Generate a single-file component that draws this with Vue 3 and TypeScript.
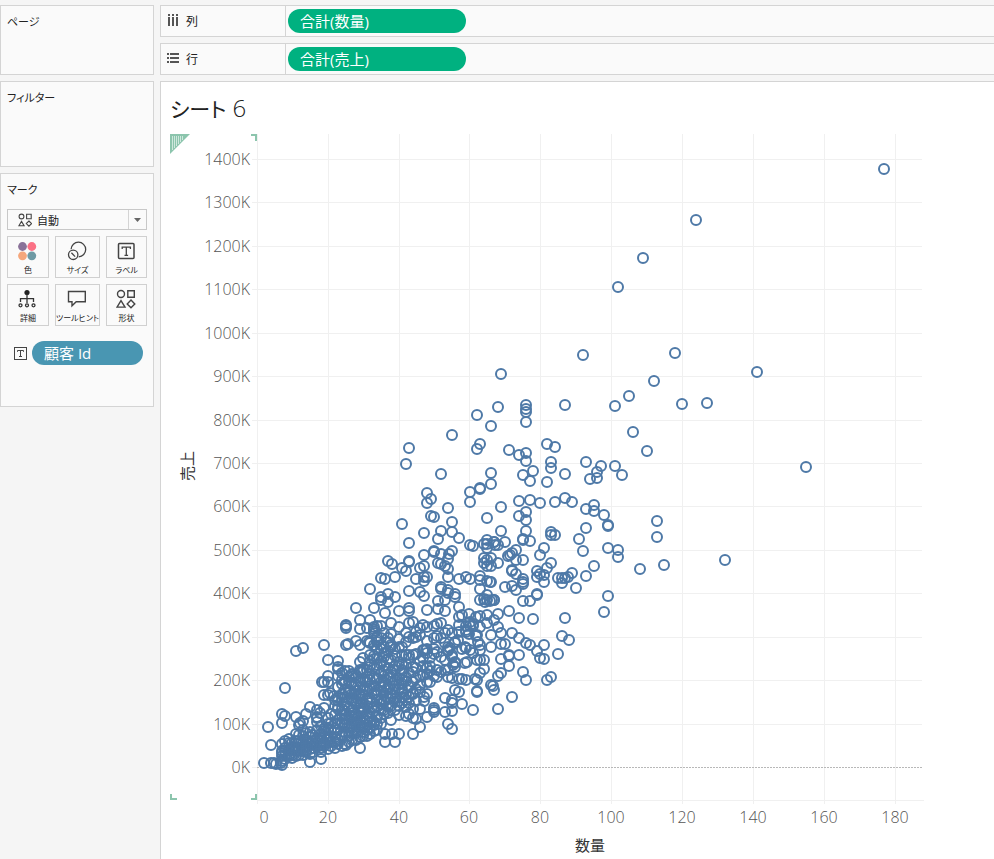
<script setup lang="ts">
interface Shelf { id: string; label: string; pill: string }
interface Dot { x: number; y: number }

const shelves: Shelf[] = [
  { id: 'columns', label: '列', pill: '合計(数量)' },
  { id: 'rows', label: '行', pill: '合計(売上)' },
]

const unitX = 3.545
const unitY = 43.43
const px = (q: number) => Math.floor(257.2 + q * unitX) + 0.5
const py = (hundreds: number) => Math.round(767 - hundreds * unitY) + 0.5

const xTicks = Array.from({ length: 10 }, (_, i) => i * 20)
const yTicks = Array.from({ length: 15 }, (_, i) => i)

/* Customers outside the crowded core, as plot positions. */
const outer = `
884,169 696,220 643,258 618,287 583,355 675,353 654,381 757,372 501,374 629,396 615,406 565,405 682,404 707,403
498,407 526,405 526,409 526,412 526,422 477,415 491,426 452,435 633,432 647,451 409,448 406,464 806,467 725,560
657,521 657,537 664,565 640,569 509,450 519,455 526,453 526,461 547,444 555,447 551,462 551,468 586,462 601,466
615,466 622,475 597,472 597,478 590,479 523,475 533,471 530,481 547,482 565,474 491,473 491,484 519,501 530,500
540,503 555,502 565,498 572,502 586,509 594,505 594,511 604,515 501,507 526,512 519,516 526,520 501,531 526,531
523,539 523,540 530,541 551,532 551,535 555,535 586,528 579,539 583,551 608,525 608,526 594,566 586,576 608,548
618,550 618,557 576,588 572,573 608,596 604,612 544,548 540,555 551,563 547,568 537,571 540,574 544,575 537,577
544,582 537,594 537,595 558,578 562,578 565,578 562,583 568,577 523,601 530,601 523,579 523,582 523,584 512,570
512,571 516,574 505,587 512,586 516,590 510,555 508,556 512,553 516,550 516,560 523,560 505,542 494,542 495,545
498,545 491,558 498,563 491,566 491,582 494,600 492,600 509,611 565,618 562,636 569,640 558,654 544,645 551,677
547,680 540,658 544,659 537,651 526,643 530,645 519,638 512,633 501,633 519,618 533,619 498,614 498,627 494,620
491,635 491,647 501,644 505,644 501,659 509,655 509,656 519,655 509,666 523,672 526,680 501,673 498,676 491,685
494,690 512,697 498,709 477,449 480,444 441,474 427,493 431,499 427,503 448,508 431,516 434,517 452,522 470,492
470,502 480,489 480,488 487,518 402,524 424,533 441,531 452,532 438,539 459,538 409,543 470,545 473,546 424,555
434,551 434,552 441,554 449,554 452,551 448,559 388,561 392,564 409,561 409,562 402,568 406,571 420,568 424,566
438,563 441,564 445,566 448,569 381,578 385,579 395,577 416,579 424,577 427,577 424,581 448,577 459,579 466,577
470,579 480,576 480,580 480,589 487,581 490,582 487,540 487,544 484,544 487,548 494,542 484,558 487,560 484,563
487,566 409,591 420,592 424,596 441,587 441,589 448,590 448,593 455,594 455,597 438,601 445,600 370,589 381,597
381,600 388,594 395,597 374,608 388,602 409,608 427,610 438,609 459,607 480,600 487,595 487,600 485,602 494,600
490,601 484,599 385,613 399,611 445,611 473,710 477,692 477,691 493,686 462,704 448,724 452,729 413,734 420,727
385,742 395,742 385,734 392,734 399,734 434,708 434,710 434,712 427,717 445,712 452,711 445,698 452,700 459,692
455,690 413,693 427,694 424,697 424,701 452,703 475,679 477,680 459,679 462,679 466,680 480,673 484,669 480,660
484,660 477,660 480,650 480,645 478,642 477,635 467,662 465,663 455,662 455,667 453,665 434,649 424,650 426,650
448,647 450,648 458,640 455,643 466,632 470,626 473,624 470,622 466,648 470,650 465,647 356,608 360,620 370,620
346,625 346,626 346,628 360,629 367,628 374,629 374,631 324,645 303,648 296,651 346,645 348,644 356,641 360,645
367,641 369,642 328,660 338,661 285,688 268,727 271,745 282,714 285,716 282,723 296,717 306,714 310,707 303,721
300,723 299,725 317,710 324,708 320,713 317,718 321,726 264,763 271,763 274,763 276,764 281,763 282,765 310,762
321,759 324,682 328,676 328,682 322,682 324,695 328,695 330,693 334,696 338,669 338,701 346,745 360,748
`
const parsed: Dot[] = outer.trim().split(/\s+/).map((pair) => {
  const [x, y] = pair.split(',').map(Number)
  return { x, y }
})

/* Crowded core: quantity, top, bottom, number of customers at that quantity. */
const core: [number, number, number, number][] = [
  [7, 744, 762, 5], [8, 739, 760, 5], [9, 735, 760, 5], [10, 740, 760, 5], [11, 731, 757, 5], [12, 732, 758, 6],
  [13, 728, 757, 6], [14, 732, 754, 6], [15, 731, 755, 5], [16, 733, 753, 5], [17, 712, 752, 6],
  [18, 733, 753, 6], [19, 724, 750, 6], [20, 712, 750, 6], [21, 714, 750, 6], [22, 693, 750, 8],
  [23, 665, 748, 11], [24, 666, 747, 12], [25, 666, 745, 13], [26, 664, 743, 13], [27, 667, 742, 13],
  [28, 668, 742, 14], [29, 655, 742, 15], [30, 656, 741, 15], [31, 665, 738, 14], [32, 637, 739, 14],
  [33, 618, 736, 15], [34, 618, 734, 15], [35, 622, 726, 15], [36, 632, 716, 14], [37, 630, 715, 14],
  [38, 610, 720, 11], [39, 645, 712, 10], [40, 624, 718, 11], [41, 645, 706, 11], [42, 625, 722, 10],
  [43, 607, 718, 10], [44, 616, 720, 9], [45, 617, 722, 8], [46, 615, 716, 7], [47, 623, 685, 5],
  [48, 618, 688, 7], [49, 649, 684, 4], [50, 615, 680, 4], [51, 612, 687, 5], [52, 619, 678, 4],
  [53, 625, 679, 4], [54, 621, 687, 5], [55, 625, 682, 4], [56, 628, 665, 2], [57, 612, 635, 3],
  [58, 610, 655, 2], [59, 609, 645, 2], [60, 611, 640, 2], [61, 611, 658, 2], [62, 607, 640, 2],
  [63, 609, 630, 2], [65, 607, 628, 2],
]
let seed = 20
const next = () => {
  seed = (seed * 16807) % 2147483647
  return seed / 2147483647
}
const packed: Dot[] = core.flatMap(([q, top, bottom, n]) =>
  Array.from({ length: n }, (_, i) => ({
    x: px(q) - 0.5,
    y: Math.round(top + ((i + next() * 0.95) / n) ** 0.85 * (bottom - top)),
  })),
)
const dots: Dot[] = [...packed, ...parsed]
</script>

<template>
  <div class="workbook">
    <aside class="side">
      <section class="card pages"><h2>ページ</h2></section>
      <section class="card filters"><h2>フィルター</h2></section>
      <section class="card marks">
        <h2>マーク</h2>
        <button class="type" type="button">
          <svg width="14" height="14" viewBox="0 0 14 14" fill="none" stroke="#444" stroke-width="1.1">
            <circle cx="3.5" cy="3.5" r="2.4" /><path d="M8.6 1.2h4.6v4.6H8.6zM3.5 8.4l2.6 4.4H.9zM10.9 8l2.6 2.6-2.6 2.6-2.6-2.6z" />
          </svg>
          <span class="type-name">自動</span>
          <span class="arrow"><svg width="7" height="4" viewBox="0 0 7 4"><path d="M0 0h7L3.5 4z" fill="#666" /></svg></span>
        </button>
        <div class="tiles">
          <button type="button" class="tile">
            <svg width="20" height="20" viewBox="0 0 20 20">
              <circle cx="5.5" cy="5.5" r="4.4" fill="#8a7299" /><circle cx="14.8" cy="5.5" r="4.4" fill="#fb7185" />
              <circle cx="5.5" cy="14.8" r="4.4" fill="#f5a77c" /><circle cx="14.8" cy="14.8" r="4.4" fill="#6f9aa5" />
            </svg><span>色</span>
          </button>
          <button type="button" class="tile">
            <svg width="20" height="20" viewBox="0 0 20 20" fill="none" stroke="#444" stroke-width="1.3">
              <path d="M4.1 8.2A7.3 7.3 0 1 1 11.7 15.8" /><circle cx="6.2" cy="13.8" r="4.7" /><path d="M4.4 11.8l3.7 3.8" />
            </svg><span>サイズ</span>
          </button>
          <button type="button" class="tile">
            <svg width="20" height="20" viewBox="0 0 20 20" fill="none" stroke="#444" stroke-width="1.5">
              <rect x="2.5" y="2.5" width="15.5" height="15" rx="1" /><path d="M6.2 8V6.2h8.2V8M10.3 6.2v8.3M8.5 14.4h3.6" stroke-width="1.3" />
            </svg><span>ラベル</span>
          </button>
          <button type="button" class="tile">
            <svg width="20" height="20" viewBox="0 0 20 20" fill="none" stroke="#333" stroke-width="1.3">
              <circle cx="10" cy="3.5" r="2.6" fill="#222" stroke="none" /><path d="M10 5v9M3.5 13V9.6h13V13" />
              <circle cx="3.5" cy="16.3" r="1.5" /><circle cx="10" cy="16.3" r="1.5" /><circle cx="16.5" cy="16.3" r="1.5" />
            </svg><span>詳細</span>
          </button>
          <button type="button" class="tile">
            <svg width="20" height="20" viewBox="0 0 20 20" fill="none" stroke="#444" stroke-width="1.4">
              <path d="M1.5 2.5h16.8v10.3H9.2l-4.2 4v-4H1.5z" />
            </svg><span>ツールヒント</span>
          </button>
          <button type="button" class="tile">
            <svg width="20" height="20" viewBox="0 0 20 20" fill="none" stroke="#444" stroke-width="1.4">
              <circle cx="5" cy="5" r="3.5" /><path d="M11.8 1.7h6.5v6.5h-6.5zM5 11.6l4 6.5H1zM15 11.1l3.8 3.8-3.8 3.8-3.8-3.8z" />
            </svg><span>形状</span>
          </button>
        </div>
        <div class="mark-row">
          <svg width="13" height="13" viewBox="0 0 13 13" fill="none" stroke="#444" stroke-width="1">
            <rect x=".5" y=".5" width="12" height="12" /><path d="M3.5 4.8V3.5h6v1.3M6.5 3.5v6M5 9.5h3" />
          </svg>
          <button type="button" class="pill blue">顧客 Id</button>
        </div>
      </section>
    </aside>

    <main class="main">
      <div v-for="shelf in shelves" :key="shelf.id" class="shelf">
        <div class="shelf-name">
          <svg v-if="shelf.id === 'columns'" width="13" height="13" viewBox="0 0 13 13" fill="#555">
            <path d="M1 0h2v2H1zM5 0h2v2H5zM9 0h2v2H9zM1 3h2v9H1zM5 3h2v9H5zM9 3h2v9H9z" />
          </svg>
          <svg v-else width="13" height="13" viewBox="0 0 13 13" fill="#555">
            <path d="M0 1h2v2H0zM0 5h2v2H0zM0 9h2v2H0zM3 1h9v2H3zM3 5h9v2H3zM3 9h9v2H3z" />
          </svg>
          <span>{{ shelf.label }}</span>
        </div>
        <button type="button" class="pill green">{{ shelf.pill }}</button>
      </div>

      <section class="sheet">
        <h1><span class="kana">シート</span> 6</h1>
        <svg class="chart" width="833" height="725" viewBox="161 134 833 725" role="img" aria-labelledby="x-name y-name">
          <g class="corner">
            <path d="M170 134h20l-20 20z" fill="#8cc5ad" />
            <path d="M172.5 136v14M174.5 136v12M176.5 136v10M178.5 136v8M180.5 136v6M182.5 136v4" stroke="#cfe8dd" />
            <path d="M251 135h5v6M171 794v5h6M251 799h5v-5" fill="none" stroke="#8cc5ad" stroke-width="2" />
          </g>
          <g class="grid">
            <line v-for="t in xTicks" :key="t" :x1="px(t)" :x2="px(t)" y1="134" y2="804" />
            <line v-for="t in yTicks.slice(1)" :key="t" x1="252" x2="922" :y1="py(t)" :y2="py(t)" />
            <line x1="257" x2="924" y1="800.5" y2="800.5" />
            <line x1="252" x2="257" y1="767.5" y2="767.5" />
          </g>
          <line class="zero" x1="257" x2="922" y1="767.5" y2="767.5" />
          <g class="ticks" text-anchor="end">
            <text v-for="t in yTicks" :key="t" x="250" :y="py(t) + 5.5">{{ t ? t * 100 : 0 }}K</text>
          </g>
          <g class="ticks" text-anchor="middle">
            <text v-for="t in xTicks" :key="t" :x="t ? px(t) - 0.5 : 264" y="823">{{ t }}</text>
          </g>
          <g class="dots"><circle v-for="(d, i) in dots" :key="i" :cx="d.x" :cy="d.y" r="5" /></g>
          <text id="x-name" class="axis" x="590" y="851" text-anchor="middle">数量</text>
          <text id="y-name" class="axis" transform="translate(193 466) rotate(-90)" text-anchor="middle">売上</text>
        </svg>
      </section>
    </main>
  </div>
</template>

<style>
body { background: #f5f5f5; }
</style>

<style scoped>
.workbook {
  display: grid;
  grid-template-columns: 154px minmax(0, 1fr);
  column-gap: 6px;
  min-height: 100vh;
  box-sizing: border-box;
  padding-top: 5px;
  overflow: hidden;
  color: #222;
  background: #f5f5f5;
  font-family: "Open Sans", "Noto Sans CJK JP", sans-serif;
  font-feature-settings: "palt" 1;
}
*, *::before { box-sizing: border-box; }
button { font: inherit; font-feature-settings: inherit; color: inherit; padding: 0; }
svg { display: block; flex: none; }
.side { display: flex; flex-direction: column; gap: 6px; }
.card { background: #fafafa; border: 1px solid #d4d4d4; padding: 6px; }
.card h2 { margin: 0; font-size: 11px; line-height: 20px; font-weight: 400; }
.pages { height: 70px; }
.filters { height: 86px; }
.marks { height: 234px; }
.type {
  display: flex;
  align-items: center;
  width: 100%;
  height: 21px;
  margin-top: 9px;
  padding-left: 10px;
  gap: 5px;
  border: 1px solid #c8c8c8;
  background: #fafafa;
  font-size: 11px;
}
.type-name { flex: 1; text-align: left; }
.arrow { width: 18px; height: 100%; display: grid; place-items: center; border-left: 1px solid #d4d4d4; }
.tiles { display: grid; grid-template-columns: 42px 45px 41px; gap: 6px; justify-content: space-between; margin-top: 6px; }
.tile {
  height: 42px;
  display: flex;
  flex-direction: column;
  align-items: center;
  padding-top: 4px;
  border: 1px solid #d0d0d0;
  background: #fafafa;
  line-height: 12px;
  white-space: nowrap;
}
.tile svg { margin-right: 2px; }
.tile span { margin-top: 3px; font-size: 8px; }
.mark-row { display: flex; align-items: center; gap: 5px; margin: 15px 4px 0 7px; }
.pill {
  height: 24px;
  padding-left: 12px;
  border: 0;
  border-radius: 12px;
  color: #fff;
  font-size: 15px;
  line-height: 24px;
  text-align: left;
}
.blue { flex: 1; background: #4996b2; }
.green { width: 178px; background: #00b180; }
.main { display: flex; flex-direction: column; gap: 6px; }
.shelf {
  display: flex;
  align-items: center;
  gap: 2px;
  height: 32px;
  border: 1px solid #d4d4d4;
  border-right: 0;
  background: #fafafa;
}
.shelf-name {
  display: flex;
  align-items: center;
  gap: 6px;
  width: 125px;
  height: 100%;
  padding-left: 6px;
  border-right: 1px solid #d4d4d4;
  font-size: 12px;
}
.shelf-name svg { margin-bottom: 2px; }
.sheet { flex: 1; background: #fff; border: 1px solid #d4d4d4; border-width: 1px 0 0 1px; overflow: hidden; }
.sheet h1 { margin: 0; padding: 6px 9px 5px; font-size: 24px; line-height: 40px; font-weight: 300; }
.kana { font-size: 21px; font-weight: 400; }
.chart { overflow: visible; }
.grid line { stroke: #f0f0f0; }
.zero { stroke: #b8b8b8; stroke-dasharray: 2 1; }
.ticks { font-size: 16px; font-weight: 300; fill: #555; }
.axis { font-size: 15px; fill: #333; }
.dots circle { fill: none; stroke: #4e79a7; stroke-width: 2; }
</style>
